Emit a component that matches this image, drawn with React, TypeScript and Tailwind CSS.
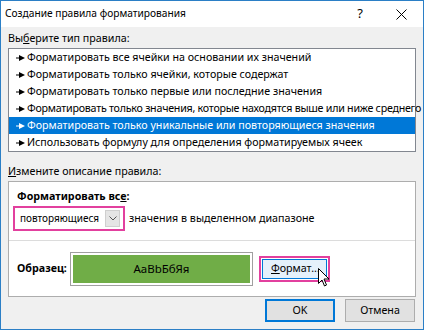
import React from "react";

const font = { fontFamily: '"Noto Sans", "Open Sans", sans-serif' };

function Arrow() {
  return (
    <svg width="9" height="6" viewBox="0 0 9 6" className="shrink-0">
      <rect x="0" y="2.5" width="4" height="1" fill="currentColor" />
      <polygon points="3,0 9,3 3,6" fill="currentColor" />
    </svg>
  );
}

const items = [
  "Форматировать все ячейки на основании их значений",
  "Форматировать только ячейки, которые содержат",
  "Форматировать только первые или последние значения",
  "Форматировать только значения, которые находятся выше или ниже среднего",
  "Форматировать только уникальные или повторяющиеся значения",
  "Использовать формулу для определения форматируемых ячеек",
];

export default function App() {
  return (
    <div
      className="w-[424px] h-[330px] bg-[#f0f0f0] border border-[#2b7fc6] flex flex-col text-[10.7px] text-black overflow-hidden"
      style={font}
    >
      <div className="h-[26px] bg-white flex items-center pl-[4px] shrink-0">
        <span className="text-[10.2px] flex-1">Создание правила форматирования</span>
        <span className="text-[13px] mr-[33px]">?</span>
        <svg width="11" height="11" viewBox="0 0 11 11" className="mr-[16px]">
          <path d="M0.5 0.5L10.5 10.5M10.5 0.5L0.5 10.5" stroke="#000" strokeWidth="1" />
        </svg>
      </div>
      <div className="flex flex-col px-[7px]">
        <div className="h-[21px] flex items-end pb-[2px]">
          <span>
            Вы<span className="underline">б</span>ерите тип правила:
          </span>
        </div>
        <div className="bg-white border border-[#828790] h-[104px] flex flex-col">
          {items.map((t, i) => (
            <div
              key={i}
              className={
                "h-[17px] flex items-center gap-[2px] pl-[7px] whitespace-nowrap " +
                (i === 4 ? "bg-[#0078d7] text-white" : "") +
                (i === 3 ? " tracking-[-0.25px]" : "")
              }
            >
              <Arrow />
              <span>{t}</span>
            </div>
          ))}
        </div>
        <div className="h-[29px] flex items-end pb-[2px]">
          <span>
            <span className="underline">И</span>змените описание правила:
          </span>
        </div>
        <div className="bg-white border border-[#adadad] h-[116px] flex flex-col">
          <div className="h-[59px] border-b border-[#dcdcdc] flex flex-col pl-[4px]">
            <div className="h-[22px] flex items-end pl-[4px] font-bold">
              <span>
                Форматировать вс<span className="underline">е</span>:
              </span>
            </div>
            <div className="flex items-center mt-[2px]">
              <div className="w-[112px] h-[25px] border-[2px] border-[#e2409e] bg-white flex items-center pl-[5px] pr-[3px]">
                <span className="flex-1 text-[10px]">повторяющиеся</span>
                <div className="w-[15px] h-[17px] bg-[#e5e5e5] border border-[#cfcfcf] flex items-center justify-center">
                  <svg width="8" height="5" viewBox="0 0 8 5">
                    <path d="M0.5 0.5L4 4L7.5 0.5" stroke="#555" fill="none" strokeWidth="1" />
                  </svg>
                </div>
              </div>
              <span className="ml-[4px]">значения в выделенном диапазоне</span>
            </div>
          </div>
          <div className="flex-1 flex items-center pl-[8px] relative">
            <span className="font-bold w-[53px]">Образец:</span>
            <div className="w-[183px] h-[34px] border border-[#a0a0a0] p-[2px] bg-white">
              <div className="w-full h-full bg-[#70ad47] flex items-center justify-center text-[11.5px]">
                АаBbБбЯя
              </div>
            </div>
            <div className="ml-[6px] w-[71px] h-[26px] border-[2px] border-[#e2409e] p-[1px]">
              <div className="w-full h-full bg-[#e5f1fb] border border-[#0078d7] flex items-center pl-[8px]">
                <span>
                  <span className="underline">Ф</span>ормат...
                </span>
              </div>
            </div>
            <svg
              width="13"
              height="20"
              viewBox="0 0 13 20"
              className="absolute left-[309px] top-[27px]"
            >
              <path
                d="M0.5 0.5L0.5 15.5L4 12L6.5 18L8.5 17L6 11L11 11Z"
                fill="#fff"
                stroke="#000"
                strokeWidth="1"
                strokeLinejoin="round"
              />
            </svg>
          </div>
        </div>
        <div className="flex justify-end gap-[10px] mt-[2px] pr-[1px]">
          <div className="w-[70px] h-[23px] bg-[#e1e1e1] border-[2px] border-[#0078d7] flex items-center justify-center">
            OK
          </div>
          <div className="w-[70px] h-[23px] bg-[#e1e1e1] border border-[#adadad] flex items-center justify-center">
            Отмена
          </div>
        </div>
      </div>
    </div>
  );
}
